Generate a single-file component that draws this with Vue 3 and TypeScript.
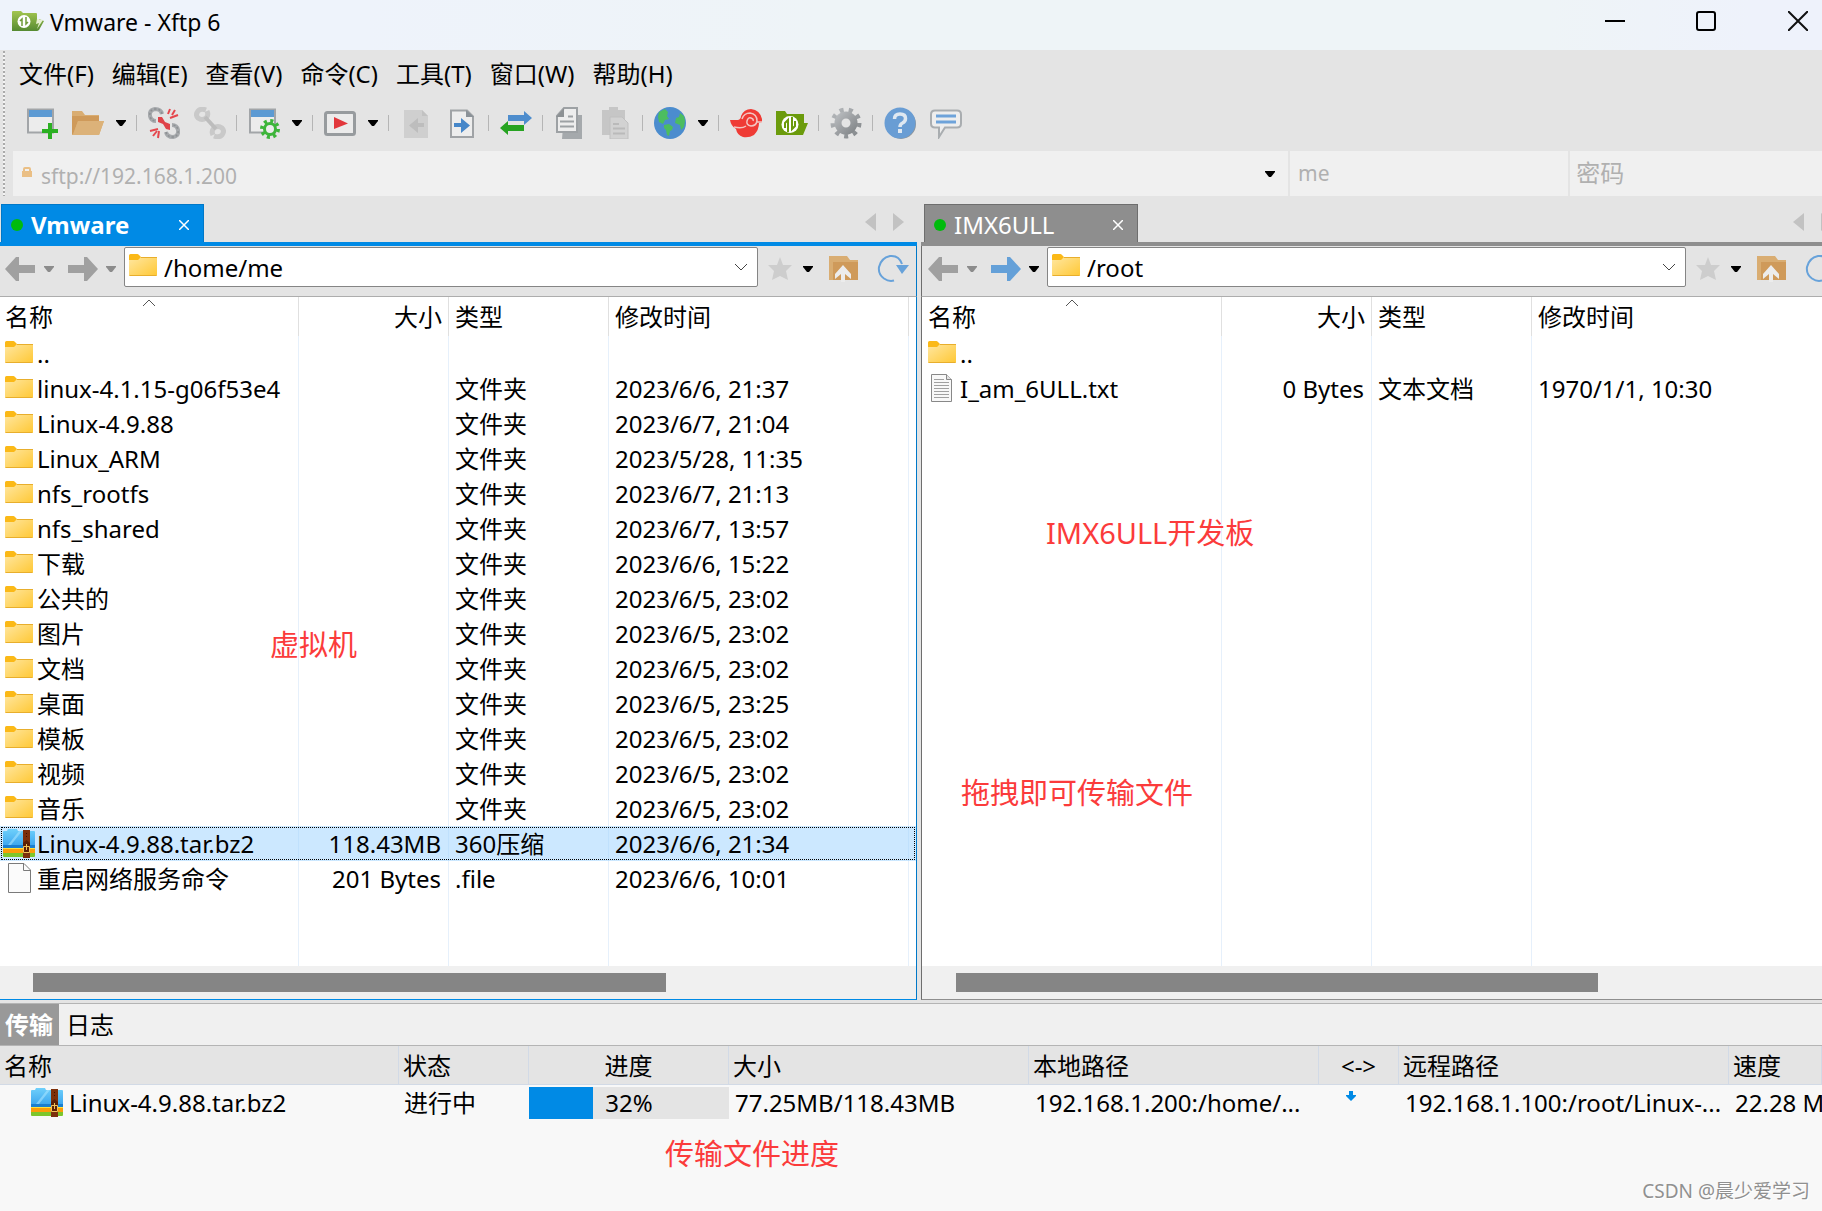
<script setup lang="ts">
import { ref } from 'vue'

interface FileRow { icon: string; name: string; size: string; type: string; time: string }
interface Pane { id: string; tab: string; path: string; forward: boolean; rows: FileRow[] }
interface Tool { icon: string; label: string; menu?: boolean; sep?: boolean }

const menus = ['文件(F)', '编辑(E)', '查看(V)', '命令(C)', '工具(T)', '窗口(W)', '帮助(H)']

const tools: Tool[] = [
  { icon: 'new', label: '新建会话' },
  { icon: 'open', label: '打开', menu: true, sep: true },
  { icon: 'cut', label: '断开' },
  { icon: 'link', label: '重新连接', sep: true },
  { icon: 'props', label: '属性', menu: true, sep: true },
  { icon: 'play', label: '同步', menu: true, sep: true },
  { icon: 'docleft', label: '传输到左侧' },
  { icon: 'docright', label: '传输到右侧', sep: true },
  { icon: 'swap', label: '交换', sep: true },
  { icon: 'copy', label: '复制' },
  { icon: 'paste', label: '粘贴', sep: true },
  { icon: 'globe', label: '编码', menu: true, sep: true },
  { icon: 'shell', label: 'Xshell' },
  { icon: 'xftp', label: 'Xftp', sep: true },
  { icon: 'gear', label: '选项', sep: true },
  { icon: 'help', label: '帮助' },
  { icon: 'chat', label: '反馈' },
]

const folder = (name: string, time: string): FileRow => ({ icon: 'folder', name, size: '', type: '文件夹', time })
const parent: FileRow = { icon: 'folder', name: '..', size: '', type: '', time: '' }

const panes: Pane[] = [
  {
    id: 'vm', tab: 'Vmware', path: '/home/me', forward: false,
    rows: [
      parent,
      folder('linux-4.1.15-g06f53e4', '2023/6/6, 21:37'),
      folder('Linux-4.9.88', '2023/6/7, 21:04'),
      folder('Linux_ARM', '2023/5/28, 11:35'),
      folder('nfs_rootfs', '2023/6/7, 21:13'),
      folder('nfs_shared', '2023/6/7, 13:57'),
      folder('下载', '2023/6/6, 15:22'),
      folder('公共的', '2023/6/5, 23:02'),
      folder('图片', '2023/6/5, 23:02'),
      folder('文档', '2023/6/5, 23:02'),
      folder('桌面', '2023/6/5, 23:25'),
      folder('模板', '2023/6/5, 23:02'),
      folder('视频', '2023/6/5, 23:02'),
      folder('音乐', '2023/6/5, 23:02'),
      { icon: 'zip', name: 'Linux-4.9.88.tar.bz2', size: '118.43MB', type: '360压缩', time: '2023/6/6, 21:34' },
      { icon: 'file', name: '重启网络服务命令', size: '201 Bytes', type: '.file', time: '2023/6/6, 10:01' },
    ],
  },
  {
    id: 'board', tab: 'IMX6ULL', path: '/root', forward: true,
    rows: [
      parent,
      { icon: 'text', name: 'I_am_6ULL.txt', size: '0 Bytes', type: '文本文档', time: '1970/1/1, 10:30' },
    ],
  },
]

const selected = ref('Linux-4.9.88.tar.bz2')
const progress = 32
</script>

<template>
  <svg class="defs" width="0" height="0" aria-hidden="true">
    <defs>
      <linearGradient id="g-folder" x1="0" y1="0" x2="1" y2="1">
        <stop offset="0" stop-color="#ffe7a2" /><stop offset="1" stop-color="#ffc834" />
      </linearGradient>
      <linearGradient id="g-zip" x1="0" y1="0" x2="0" y2="1">
        <stop offset="0" stop-color="#6fd0fb" /><stop offset="1" stop-color="#2a97ea" />
      </linearGradient>
      <linearGradient id="g-app" x1="0" y1="0" x2="0" y2="1">
        <stop offset="0" stop-color="#a3c64f" /><stop offset="1" stop-color="#558a32" />
      </linearGradient>
      <linearGradient id="g-gray" x1="0" y1="0" x2="1" y2="1">
        <stop offset="0" stop-color="#b5b8bb" /><stop offset="1" stop-color="#85898c" />
      </linearGradient>
    </defs>
    <symbol id="i-folder" viewBox="0 0 32 32">
      <path d="M2 10V4.500q0-1.500 1.500-1.500h7q1 0 2 1.500L14 6v4z" fill="#fbb917" />
      <path d="M2 9h9l3-3h16v18q0 1-1 1H3q-1 0-1-1z" fill="url(#g-folder)" />
      <path d="M2.500 24.500h27M14 6.500h16" stroke="#e8ae2c" fill="none" />
    </symbol>
    <symbol id="i-zip" viewBox="0 0 32 32">
      <path d="M0 4q0-1 1-1h3l1-2h9l1 2h16q1 0 1 1v20H0z" fill="url(#g-zip)" />
      <path d="M5 17L16 3h3L8 17z" fill="#a5e2ff" opacity=".6" />
      <path d="M0 17h32v4H0z" fill="#1a7fd0" />
      <path d="M0 20h32v5H0z" fill="#fa9d0a" />
      <path d="M0 25h32v3q0 1-1 1H1q-1 0-1-1z" fill="#7dc62b" />
      <path d="M0 20.500h32" stroke="#ffe23c" />
      <path d="M20 2h7v28h-7z" fill="#7d300b" />
      <path d="M20 15l3.500-3 3.500 3v10h-7z" fill="#5d1f05" />
      <path d="M20.500 18.500h6v6h-6zM23.500 16v6" stroke="#f0c25a" fill="none" />
      <path d="M23 5h1v1h-1zM23 8h1v1h-1z" fill="#3b1203" />
    </symbol>
    <symbol id="i-file" viewBox="0 0 32 32">
      <path d="M5.500.500H21L27.500 7v22.500h-22z" fill="#fbfbfb" stroke="#7a7a7a" />
      <path d="M20.500.500v7h7" fill="none" stroke="#7a7a7a" />
    </symbol>
    <symbol id="i-text" viewBox="0 0 32 32">
      <path d="M5.500 1.500h15l5 5v22h-20z" fill="#f8f8f8" stroke="#888" />
      <path d="M20.500 1.500v5h5" fill="#e2e2e2" stroke="#888" />
      <path d="M8 6.500h10M8 9.500h15M8 12.500h15M8 15.500h15M8 18.500h15M8 21.500h15M8 24.500h15" stroke="#a0a0a0" />
    </symbol>
    <symbol id="i-app" viewBox="0 0 32 22">
      <path d="M0 2q0-1 1-1h8l2 2h13q1 0 1 1v6l2 1V9l5 2-5 9q-1 1-2 1H0z" fill="url(#g-app)" />
      <path d="M25 9l-1 5 3-1-2 6 6-9z" fill="#e7f0d2" />
      <circle cx="12" cy="11.500" r="6.500" fill="#fff" />
      <path d="M10 16V9l-2 2M14 7v7l2-2" stroke="#6f9a38" stroke-width="1.500" fill="none" />
    </symbol>
    <symbol id="i-new" viewBox="0 0 32 32">
      <path d="M2 2.500h25v23H2z" fill="#ececec" stroke="#a2a5a8" stroke-width="2" />
      <path d="M3 3h23v7H3z" fill="#5c9ad3" />
      <path d="M22 16h4v6h6v4h-6v6h-4v-6h-6v-4h6z" fill="#2bb022" />
    </symbol>
    <symbol id="i-open" viewBox="0 0 32 32">
      <path d="M0 4h10l3 4h14v6h5l-5 14H0z" fill="#d9ad72" />
      <path d="M0 9h27v5H6L1 27H0z" fill="#cf9a5a" />
      <path d="M6 14h26l-5 14H1z" fill="#dcb279" />
    </symbol>
    <symbol id="i-cut" viewBox="0 0 32 32">
      <g fill="none" stroke="#a6a9ac" stroke-width="4">
        <path d="M14 7q-1-5-7-5-6 1-5 7 1 5 6 5M18 25q1 5 7 5 6-1 5-7-1-5-6-5" />
      </g>
      <g fill="none" stroke="#8d9093" stroke-width="1.500">
        <path d="M14 7q-1-5-7-5-6 1-5 7 1 5 6 5M18 25q1 5 7 5 6-1 5-7-1-5-6-5" stroke-dasharray="2 2" />
      </g>
      <path d="M10 10l4 0 3 5 5 2v6l-4-1-3-5-5-2z" fill="#df4249" />
      <path d="M20 7l2-5M22 11l8-3M27 3l-3 5M2 24l8-2M5 29l4-5M10 31l1-7" stroke="#e5474d" stroke-width="2" />
    </symbol>
    <symbol id="i-link" viewBox="0 0 32 32">
      <g fill="none" stroke="#c9c9c9" stroke-width="5">
        <path d="M12 3q-5-2-8 1-3 4 0 7 4 3 8 0 3-3 1-7M20 29q5 2 8-1 3-4 0-7-4-3-8 0-3 3-1 7" />
      </g>
      <path d="M11 10l11 12" stroke="#bdbdbd" stroke-width="4" />
    </symbol>
    <symbol id="i-props" viewBox="0 0 32 32">
      <path d="M2 2.500h25v23H2z" fill="#ececec" stroke="#a2a5a8" stroke-width="2" />
      <path d="M3 3h23v7H3z" fill="#5c9ad3" />
      <circle cx="22" cy="22" r="8" fill="none" stroke="#3db53a" stroke-width="4" stroke-dasharray="3 3.280" />
      <circle cx="22" cy="22" r="5.500" fill="#ececec" stroke="#3db53a" stroke-width="3" />
    </symbol>
    <symbol id="i-play" viewBox="0 0 32 32">
      <rect x="1.500" y="5.500" width="29" height="22" rx="2" fill="#ebebeb" stroke="#979b9e" stroke-width="3" />
      <path d="M10 10l14 6.500L10 22z" fill="#e2373c" />
    </symbol>
    <symbol id="i-docleft" viewBox="0 0 32 32">
      <path d="M4 3h18l6 6v22H4z" fill="#cfcfcf" /><path d="M22 3v6h6" fill="#c2c2c2" />
      <path d="M24 16h-6v-5l-9 7.500 9 7.500v-6h6z" fill="#bdbdbd" />
    </symbol>
    <symbol id="i-docright" viewBox="0 0 32 32">
      <path d="M5 3.500h16l6 6V30H5z" fill="#ededed" stroke="#a0a3a6" stroke-width="2" /><path d="M20 3v7h8z" fill="#8b9298" />
      <path d="M8 16h7v-5l9 7.500-9 7.500v-6H8z" fill="#4687c9" />
    </symbol>
    <symbol id="i-swap" viewBox="0 0 32 32">
      <path d="M8 8h16V4l8 7-8 7v-4H8z" fill="#4e8dcd" /><path d="M24 18H8v-4l-8 7 8 7v-4h16z" fill="#26a321" />
    </symbol>
    <symbol id="i-copy" viewBox="0 0 32 32">
      <path d="M10 8h18v24H8z" fill="#a5a9ac" />
      <path d="M10 1h13v24H3V9z" fill="#ededed" stroke="#9da1a4" stroke-width="2" /><path d="M10 1v9H2z" fill="#8d9194" />
      <path d="M14 9.500h5M6 14.500h14M6 19.500h14" stroke="#9da1a4" stroke-width="2" />
    </symbol>
    <symbol id="i-paste" viewBox="0 0 32 32">
      <path d="M2 3h7V0h9v3h7v25H2z" fill="#c6c6c6" />
      <path d="M10 10h12l6 6v16H10z" fill="#d2d2d2" stroke="#c0c0c0" /><path d="M13 17h6M13 21.500h12M13 26.500h12" stroke="#bababa" stroke-width="2" />
    </symbol>
    <symbol id="i-globe" viewBox="0 0 32 32">
      <circle cx="16" cy="16" r="16" fill="#4b8cce" />
      <path d="M5 5l6-3 3 3-1 4 2 3-4 1-2 4-4-2-1-5zM26 6l4 3 1 5-1 6-3 3-1-5-5-2 1-5 3-1zM10 18l5-1 4 3-1 3-2 1-1 5-2-1-1-5-2-2z" fill="#4cbd5f" />
    </symbol>
    <symbol id="i-shell" viewBox="0 0 32 32">
      <path d="M0 13h8q3-1 3-4 3-7 10-7 9 1 11 10v3l-3 1q0 7-5 12-5 3-11 2-6-2-7-8-5-3-6-9z" fill="#ef3b35" />
      <path d="M4 20q8 2 12-1M12 12q2-6 8-6 7 1 7 8-1 5-6 5-5-1-4-5 1-4 4-3 3 1 2 3M27 15l5 0" fill="none" stroke="#f3c5c1" stroke-width="1.500" />
    </symbol>
    <symbol id="i-xftp" viewBox="0 0 32 32">
      <path d="M0 4h9l2 3h17v9h4l-5 12H0z" fill="#6b9b0c" />
      <circle cx="14" cy="17.500" r="8.500" fill="#fff" />
      <path d="M12 25V13l-3 3v5M16 10v12l3-3v-5" stroke="#6b9b0c" stroke-width="2" fill="none" />
    </symbol>
    <symbol id="i-gear" viewBox="0 0 32 32">
      <circle cx="16" cy="16" r="13" fill="none" stroke="url(#g-gray)" stroke-width="5" stroke-dasharray="4 5.080" />
      <circle cx="16" cy="16" r="8" fill="none" stroke="url(#g-gray)" stroke-width="7" />
    </symbol>
    <symbol id="i-help" viewBox="0 0 32 32">
      <circle cx="17" cy="17" r="15" fill="#8f9498" /><circle cx="16" cy="16" r="15.500" fill="#699dd4" />
      <path d="M10.500 12q0-5 5.500-5t5.500 4.500q0 3-3 4.500-2.500 1-2.500 4" fill="none" stroke="#dfe8f1" stroke-width="3.500" /><path d="M14 22h4v4h-4z" fill="#dfe8f1" />
    </symbol>
    <symbol id="i-chat" viewBox="0 0 32 32">
      <path d="M5 3.500h22q4 0 4 4v9q0 4-4 4H15L9 30V20.500H5q-4 0-4-4v-9q0-4 4-4z" fill="#eee" stroke="#a9adb0" stroke-width="2" />
      <path d="M6 9h20M6 15h20" stroke="#6ea3da" stroke-width="3" />
    </symbol>
    <symbol id="i-caret" viewBox="0 0 10 6"><path d="M0 0h10v1L6 6H4L0 1z" fill="currentColor" /></symbol>
    <symbol id="i-back" viewBox="0 0 30 24"><path d="M0 12L11 0h3v8h16v8H14v8h-3z" fill="currentColor" /></symbol>
    <symbol id="i-next" viewBox="0 0 30 24"><path d="M30 12L19 0h-3v8H0v8h16v8h3z" fill="currentColor" /></symbol>
    <symbol id="i-star" viewBox="0 0 28 26"><path d="M14 1l3 8h9l-6 6 2 9-8-4-8 4 2-9-6-6h9z" fill="#cdcdcd" /></symbol>
    <symbol id="i-up" viewBox="0 0 30 28">
      <path d="M0 1h18l3 4h8v20H0z" fill="#d9ad72" /><path d="M4 7h25v18H4z" fill="#cf9a5a" />
      <path d="M6 19l8-9 8 9v5l-6-5v8h-4v-8l-6 5z" fill="#ececec" />
    </symbol>
    <symbol id="i-reload" viewBox="0 0 32 30">
      <path d="M17 26.500Q12 28 7 24.500 1 20 2 13 4 4 13 2q9-1 12 8" fill="none" stroke="#67a2da" stroke-width="2" />
      <path d="M19 11h13l-7 9z" fill="#67a2da" />
    </symbol>
    <symbol id="i-x" viewBox="0 0 10 10"><path d="M0 0l10 10M10 0L0 10" stroke="currentColor" stroke-width="1.500" /></symbol>
  </svg>

  <div class="app">
    <header class="titlebar">
      <svg class="logo"><use href="#i-app" /></svg>
      <h1>Vmware - Xftp 6</h1>
      <div class="winctl">
        <button aria-label="最小化"><svg viewBox="0 0 20 20"><path d="M0 10h20" stroke="#000" stroke-width="2" /></svg></button>
        <button aria-label="最大化"><svg viewBox="0 0 20 20"><rect x="1" y="1" width="18" height="18" rx="2" fill="none" stroke="#000" stroke-width="2" /></svg></button>
        <button aria-label="关闭"><svg viewBox="0 0 20 20"><path d="M0 0l20 20M20 0L0 20" stroke="#111" stroke-width="2" /></svg></button>
      </div>
    </header>

    <div class="bars">
      <nav class="menubar"><button v-for="m in menus" :key="m">{{ m }}</button></nav>

      <div class="toolbar">
        <template v-for="t in tools" :key="t.icon">
          <button class="tool" :aria-label="t.label"><svg><use :href="'#i-' + t.icon" /></svg></button>
          <button v-if="t.menu" class="drop" :aria-label="t.label + '菜单'"><svg class="caret"><use href="#i-caret" /></svg></button>
          <span v-if="t.sep" class="sep"></span>
        </template>
      </div>

      <form class="address" @submit.prevent>
        <div class="host">
          <svg class="lock" viewBox="0 0 10 10"><path d="M0 4h10v6H0z" fill="#eabf85" /><path d="M2 4V2q0-1 1-1h4q1 0 1 1v2" fill="none" stroke="#eabf85" stroke-width="2" /></svg>
          <input aria-label="主机地址" value="sftp://192.168.1.200" />
          <button class="drop" type="button" aria-label="历史地址"><svg class="caret"><use href="#i-caret" /></svg></button>
        </div>
        <input class="user" aria-label="用户名" value="me" />
        <input class="pass" type="password" aria-label="密码" placeholder="密码" />
      </form>
    </div>

    <main class="panes">
      <section v-for="p in panes" :key="p.id" class="pane" :class="p.id">
        <div class="tabs">
          <div class="tab">
            <span class="dot"></span>
            <button class="tabname">{{ p.tab }}</button>
            <button class="close" aria-label="关闭标签"><svg><use href="#i-x" /></svg></button>
          </div>
          <div class="scrollers">
            <button aria-label="上一个标签"><svg viewBox="0 0 11 18"><path d="M11 0v18L0 9z" fill="#c2c2c2" /></svg></button>
            <button aria-label="下一个标签"><svg viewBox="0 0 11 18"><path d="M0 0v18l11-9z" fill="#c2c2c2" /></svg></button>
          </div>
        </div>

        <div class="nav">
          <button class="arrow" aria-label="后退"><svg><use href="#i-back" /></svg></button>
          <button class="mini off" aria-label="后退记录"><svg class="caret"><use href="#i-caret" /></svg></button>
          <button class="arrow fwd" :class="{ on: p.forward }" aria-label="前进"><svg><use href="#i-next" /></svg></button>
          <button class="mini" :class="{ off: !p.forward }" aria-label="前进记录"><svg class="caret"><use href="#i-caret" /></svg></button>
          <div class="path">
            <svg class="pic"><use href="#i-folder" /></svg>
            <input :value="p.path" aria-label="路径" />
            <button aria-label="展开路径"><svg viewBox="0 0 14 8"><path d="M1 1l6 6 6-6" fill="none" stroke="#444" /></svg></button>
          </div>
          <button class="star" aria-label="收藏"><svg><use href="#i-star" /></svg></button>
          <button class="mini" aria-label="收藏菜单"><svg class="caret"><use href="#i-caret" /></svg></button>
          <button class="up" aria-label="上级目录"><svg><use href="#i-up" /></svg></button>
          <button class="reload" aria-label="刷新"><svg><use href="#i-reload" /></svg></button>
        </div>

        <div class="list">
          <table>
            <colgroup><col class="c1" /><col class="c2" /><col class="c3" /><col class="c4" /><col /></colgroup>
            <thead>
              <tr>
                <th>名称<svg class="sort" viewBox="0 0 14 8"><path d="M1 7l6-6 6 6" fill="none" stroke="#555" /></svg></th>
                <th class="num">大小</th><th>类型</th><th>修改时间</th><td></td>
              </tr>
            </thead>
            <tbody>
              <tr v-for="r in p.rows" :key="r.name" :class="{ sel: r.name === selected }" @click="selected = r.name">
                <td class="name"><div><svg class="pic"><use :href="'#i-' + r.icon" /></svg>{{ r.name }}</div></td>
                <td class="num">{{ r.size }}</td><td>{{ r.type }}</td><td>{{ r.time }}</td><td></td>
              </tr>
            </tbody>
          </table>
          <template v-if="p.id === 'vm'"><p class="note vmnote">虚拟机</p></template>
          <template v-else>
            <p class="note boardnote">IMX6ULL开发板</p>
            <p class="note dragnote">拖拽即可传输文件</p>
          </template>
        </div>
        <div class="hscroll"><div class="thumb"></div></div>
      </section>
    </main>

    <section class="transfer">
      <div class="ttabs"><button class="active">传输</button><button>日志</button></div>
      <table>
        <colgroup>
          <col class="t1" /><col class="t2" /><col class="t3" /><col class="t4" /><col class="t5" /><col class="t6" /><col class="t7" /><col />
        </colgroup>
        <thead>
          <tr><th>名称</th><th>状态</th><th class="mid">进度</th><th>大小</th><th>本地路径</th><th class="mid">&lt;-&gt;</th><th>远程路径</th><th>速度</th></tr>
        </thead>
        <tbody>
          <tr>
            <td class="tname"><div><svg class="pic"><use href="#i-zip" /></svg>Linux-4.9.88.tar.bz2</div></td>
            <td class="state">进行中</td>
            <td class="prog"><div class="bar"><div class="fill" :style="{ width: progress + '%' }"></div><span>{{ progress }}%</span></div></td>
            <td>77.25MB/118.43MB</td>
            <td>192.168.1.200:/home/...</td>
            <td class="dir"><svg viewBox="0 0 10 10"><path d="M3 0h4v4h3v1L5 10 0 5V4h3z" fill="#008ae5" /></svg></td>
            <td>192.168.1.100:/root/Linux-...</td>
            <td>22.28 M</td>
          </tr>
        </tbody>
      </table>
      <p class="note upnote">传输文件进度</p>
      <p class="mark">CSDN @晨少爱学习</p>
    </section>
  </div>
</template>

<style>
body { margin: 0; overflow: hidden; }
</style>

<style scoped>
.defs { position: absolute; }
.app {
  min-height: 100vh; display: flex; flex-direction: column; overflow: hidden;
  background: #e4e4e4; color: #000;
  font: 24px/34px "Noto Sans", "Noto Sans CJK SC", sans-serif;
}
button, input { font: inherit; color: inherit; border: 0; background: none; padding: 0; margin: 0; outline: 0; min-width: 0; box-sizing: border-box; }
button { flex: none; display: flex; align-items: center; justify-content: center; white-space: nowrap; }
svg { display: block; flex: none; }
p, h1 { margin: 0; font-weight: 400; }

.titlebar { height: 50px; display: flex; align-items: center; background: linear-gradient(90deg, #eef3fb 0%, #eef3fb 20%, #eef4f7 45%, #eef4f7 85%, #eef2fb 96%); padding-left: 12px; }
.logo { width: 32px; height: 22px; margin-bottom: 8px; }
h1 { font-size: 23px; line-height: 44px; height: 50px; margin-left: 6px; flex: 1; }
.winctl { display: flex; height: 50px; }
.winctl button { width: 91px; height: 42px; }
.winctl button:last-child { width: 48px; margin-left: 23px; }
.winctl svg { width: 20px; height: 20px; }

.bars { position: relative; height: 146px; }
.bars::before {
  content: ""; position: absolute; left: 3px; top: 1px; bottom: 0; width: 2px;
  background: repeating-linear-gradient(#aaa 0 2px, #f4f4f4 2px 4px);
}
.menubar { display: flex; gap: 18px; height: 48px; padding-left: 19px; }
.toolbar { display: flex; align-items: center; height: 53px; padding-left: 19px; box-sizing: border-box; padding-bottom: 3px; }
.tool { width: 46px; height: 44px; }
.tool svg { width: 32px; height: 32px; }
.drop { width: 22px; height: 44px; }
.toolbar .drop { padding-right: 2px; }
.caret { width: 10px; height: 6px; }
.sep { width: 1px; height: 16px; margin: 0 4px 0 3px; background: #b5b5b5; }
.address { display: flex; gap: 2px; height: 45px; padding-left: 13px; color: #b0b0b0; }
.address > * { background: #f0f0f0; box-sizing: border-box; }
.host { flex: 1281 1 0; display: flex; align-items: center; padding: 4px 7px 0 9px; font-size: 21px; }
.host input { flex: 1; margin-left: 9px; }
.host .drop { color: #000; padding-bottom: 4px; }
.lock { width: 10px; height: 10px; margin-bottom: 8px; }
.user { flex: 275 1 0; padding: 0 0 2px 8px; font-size: 21px; }
.pass { flex: 250 1 0; padding: 0 0 2px 6px; }
.pass::placeholder { color: #b0b0b0; }

.panes { flex: 1 0 auto; display: flex; gap: 4px; margin-right: -23px; padding-top: 8px; }
.pane { flex: 917 1 0; min-width: 0; display: flex; flex-direction: column; --accent: #008ae5; --edge: #0078c8; --shift: 0px; }
.pane.board { flex: 924 1 0; --accent: #8e8e8e; --edge: #6e6e6e; --shift: 1px; }
.tabs { display: flex; justify-content: space-between; height: 38px; border-bottom: 4px solid var(--accent); }
.tab {
  display: flex; align-items: center; width: 203px; height: 38px; margin-left: 1px; box-sizing: border-box;
  background: var(--accent); color: #fff; padding: 2px 14px 0 9px; border: 1px solid var(--edge); border-bottom: 0;
}
.board .tab { width: 214px; margin-left: 3px; }
.dot { width: 12px; height: 12px; border-radius: 50%; background: #00bb0c; }
.tabname { flex: 1; justify-content: flex-start; margin-left: 8px; }
.vm .tabname { font-weight: 700; }
.close { width: 10px; height: 10px; }
.close svg { width: 10px; height: 10px; }
.scrollers { display: flex; gap: 17px; align-items: center; padding: 0 13px 2px 0; }
.scrollers svg { width: 11px; height: 18px; }

.nav {
  display: flex; align-items: center; height: 51px; box-sizing: border-box; padding: 3px 7px 7px 5px;
  border-right: 1px solid var(--edge); border-bottom: 1px solid #adadad;
}
.board .nav { border-left: 1px solid var(--edge); padding-left: 6px; }
.arrow { color: #a0a0a0; }
.arrow svg { width: 30px; height: 24px; }
.arrow.fwd { margin-left: 14px; }
.arrow.on { color: #64a0d8; }
.mini { width: 10px; height: 24px; margin-left: 9px; color: #000; }
.arrow.fwd + .mini { margin-left: 8px; }
.mini.off { color: #8c8c8c; }
.path {
  flex: 1; min-width: 0; height: 40px; box-sizing: border-box; margin: 0 8px 4px; display: flex; align-items: center;
  background: #fff; border: 1px solid #858585; border-radius: 2px; padding: 0 9px 0 2px;
}
.pic { width: 32px; height: 32px; }
.path input { flex: 1; margin-left: 5px; height: 36px; }
.path button svg { width: 14px; height: 8px; }
.star svg { width: 28px; height: 26px; }
.up { margin-left: 16px; }
.up svg { width: 30px; height: 28px; }
.reload { margin-left: 18px; }
.reload svg { width: 32px; height: 30px; }

.list {
  flex: 1 0 auto; position: relative; border-right: 1px solid var(--edge);
  background:
    linear-gradient(#e6f0fb, #e6f0fb) calc(298px + var(--shift)) 0 / 1px 100% no-repeat,
    linear-gradient(#e6f0fb, #e6f0fb) calc(448px + var(--shift)) 0 / 1px 100% no-repeat,
    linear-gradient(#e6f0fb, #e6f0fb) calc(608px + var(--shift)) 0 / 1px 100% no-repeat,
    linear-gradient(#e6f0fb, #e6f0fb) calc(908px + var(--shift)) 0 / 1px 100% no-repeat, #fff;
}
.board .list { border-left: 1px solid var(--edge); padding-left: var(--shift); }
table { border-collapse: separate; border-spacing: 0; table-layout: fixed; width: 100%; }
th { font-weight: 400; text-align: left; }
th, td { padding: 0 6px; white-space: nowrap; overflow: hidden; }
.c1 { width: 299px; } .c2 { width: 150px; } .c3 { width: 160px; } .c4 { width: 300px; }
.list th { position: relative; height: 39px; border-right: 1px solid #e0e0e0; padding: 1px 5px 0 6px; box-sizing: border-box; }
.list th:first-child { padding-left: 5px; }
.list td { height: 35px; box-sizing: border-box; line-height: 35px; }
.list td:last-child { padding: 0; }
.sort { position: absolute; left: 142px; top: 2px; width: 14px; height: 8px; }
.list td.name { padding: 0 0 0 3px; }
.name div, .tname div { display: flex; align-items: center; gap: 2px; }
.list .num { text-align: right; padding-right: 6px; }
.list td.num { padding-right: 8px; }
.sel { background: rgba(153, 209, 255, .5); outline: 1px dotted #000; outline-offset: -2px; }
.hscroll { position: relative; height: 34px; box-sizing: border-box; background: #f0f0f0; border-right: 1px solid var(--edge); border-bottom: 1px solid var(--accent); padding: 7px 250px 0 33px; }
.board .hscroll { border-left: 1px solid var(--edge); padding: 7px 246px 0 34px; }
.thumb { height: 19px; background: #858585; }

.note { position: absolute; color: #fb3b3b; font-size: 29px; line-height: 40px; white-space: nowrap; }
.vmnote { left: 270px; top: 328px; }
.boardnote { left: 124px; top: 216px; }
.dragnote { left: 39px; top: 476px; }

.transfer { position: relative; min-height: 208px; box-sizing: border-box; margin-top: 3px; border-top: 1px solid #b4b4b4; background: #f8f8f8; }
.ttabs { display: flex; height: 41px; background: #f0f0f0; border-bottom: 1px solid #b4b4b4; }
.ttabs button { padding: 0 7px; }
.ttabs .active { width: 59px; padding: 0 1px 0 0; background: #999; color: #fff; font-weight: 700; }
.t1 { width: 399px; } .t2 { width: 130px; } .t3 { width: 200px; } .t4 { width: 300px; } .t5 { width: 290px; } .t6 { width: 80px; } .t7 { width: 330px; }
.transfer th { height: 39px; box-sizing: border-box; padding: 2px 4px 0; background: #e4e4e4; border-right: 1px solid #d2dae6; border-bottom: 1px solid #d2dae6; }
.transfer .mid { text-align: center; }
.transfer td { height: 36px; box-sizing: border-box; padding: 0 0 0 6px; }
.transfer td.tname { padding: 0 0 0 31px; }
.transfer .tname div { gap: 6px; }
.transfer td.state { padding-left: 5px; }
.transfer td.prog { padding: 0; }
.bar { position: relative; height: 32px; line-height: 32px; background: #e4e4e4; text-align: center; }
.fill { position: absolute; left: 0; top: 0; bottom: 0; background: #008ae5; }
.bar span { position: relative; }
.transfer td.dir { padding: 6px 0 0 27px; vertical-align: top; }
.dir svg { width: 10px; height: 10px; }
.upnote { left: 665px; top: 130px; }
.mark { position: absolute; right: 12px; bottom: 5px; font-size: 19px; line-height: 30px; color: #909090; text-shadow: 1px 1px 0 #fff; }
</style>
